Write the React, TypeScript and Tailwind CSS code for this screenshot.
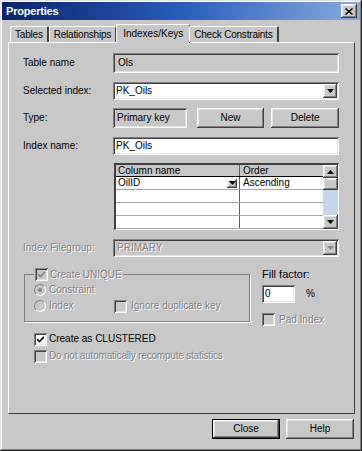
import React from 'react';

// classic win32 bevels
const raised =
  'shadow-[inset_-1px_-1px_#404040,inset_1px_1px_#ffffff,inset_-2px_-2px_#808080,inset_2px_2px_#e4e4e4]';
const sunken =
  'shadow-[inset_1px_1px_#808080,inset_-1px_-1px_#ffffff,inset_2px_2px_#404040,inset_-2px_-2px_#e4e4e4]';
const dim = "text-[#848484] [text-shadow:1px_1px_0_#ffffff]";

const Arrow: React.FC<{ up?: boolean; color?: string }> = ({ up, color = '#000' }) => (
  <svg width="7" height="4" viewBox="0 0 7 4">
    <path d={up ? 'M3.5 0 L7 4 L0 4 Z' : 'M0 0 L7 0 L3.5 4 Z'} fill={color} />
  </svg>
);

const DropBtn: React.FC<{ disabled?: boolean; className?: string }> = ({ disabled, className = '' }) => (
  <div className={`flex items-center justify-center bg-[#c8c8c8] ${raised} ${className}`}>
    <Arrow color={disabled ? '#8a8a8a' : '#000'} />
  </div>
);

const Check: React.FC<{ checked?: boolean; disabled?: boolean }> = ({ checked, disabled }) => (
  <div
    className={`w-[13px] h-[13px] shrink-0 flex items-center justify-center ${sunken} ${
      disabled ? 'bg-[#c8c8c8]' : 'bg-white'
    }`}
  >
    {checked && (
      <svg width="7" height="7" viewBox="0 0 7 7">
        <path d="M0 3 L2.5 5.5 L7 0.8" stroke={disabled ? '#808080' : '#000'} strokeWidth="1.6" fill="none" />
      </svg>
    )}
  </div>
);

const Radio: React.FC<{ on?: boolean }> = ({ on }) => (
  <div className="w-[12px] h-[12px] shrink-0 rounded-full border border-t-[#808080] border-l-[#808080] border-r-white border-b-white bg-[#c8c8c8] flex items-center justify-center">
    {on && <div className="w-[4px] h-[4px] rounded-full bg-[#808080]" />}
  </div>
);

const Label: React.FC<{ children: React.ReactNode; disabled?: boolean }> = ({ children, disabled }) => (
  <div className={`w-[90px] shrink-0 ${disabled ? dim : 'text-black'}`}>{children}</div>
);

const tabs = ['Tables', 'Relationships', 'Indexes/Keys', 'Check Constraints'];

const App: React.FC = () => {
  return (
    <div className="w-[362px] h-[451px] bg-[#c8c8c8] flex flex-col font-['Liberation_Sans',Arial,sans-serif] text-[10px] leading-none text-black shadow-[inset_-1px_-1px_#202020,inset_1px_1px_#e4e4e4,inset_-2px_-2px_#808080,inset_2px_2px_#ffffff] overflow-hidden">
      {/* title bar */}
      <div className="mx-[2px] mt-[2px] h-[18px] flex items-center justify-between pl-[4px] pr-[3px] bg-gradient-to-r from-[#0a246a] via-[#2a5cbc] to-[#86acdc]">
        <span className="text-white font-bold text-[11px] tracking-[-0.2px]">Properties</span>
        <div className={`w-[16px] h-[14px] bg-[#c8c8c8] flex items-center justify-center ${raised}`}>
          <svg width="8" height="7" viewBox="0 0 8 7">
            <path d="M0.5 0.5 L7.5 6.5 M7.5 0.5 L0.5 6.5" stroke="#000" strokeWidth="1.5" />
          </svg>
        </div>
      </div>

      {/* tabs */}
      <div className="flex items-end ml-[10px] mt-[4px] h-[18px] relative z-10">
        {tabs.map((t, i) =>
          i === 2 ? (
            <div
              key={t}
              className="h-[19px] -mx-[1px] px-[6px] pt-[4px] bg-[#c8c8c8] border-t border-l border-white border-r border-r-[#404040] rounded-t-[2px] -mb-[1px]"
            >
              {t}
            </div>
          ) : (
            <div
              key={t}
              className="h-[16px] px-[4px] pt-[3px] border-t border-l border-white border-r-2 border-r-[#404040] rounded-t-[2px] tracking-[-0.2px]"
            >
              {t}
            </div>
          )
        )}
      </div>

      {/* panel */}
      <div className="ml-[8px] w-[347px] h-[372px] border-l border-t border-white border-r border-b border-r-[#404040] border-b-[#404040] pl-[14px] pr-[15px] pt-[10px] flex flex-col">
        <div className="flex items-center h-[20px]">
          <Label>Table name</Label>
          <div className={`flex-1 h-[20px] px-[5px] flex items-center bg-[#c8c8c8] ${sunken}`}>Ols</div>
        </div>

        <div className="flex items-center h-[18px] mt-[9px]">
          <Label>Selected index:</Label>
          <div className={`flex-1 h-[18px] pl-[3px] pr-[2px] flex items-center justify-between bg-white ${sunken}`}>
            <span>PK_Oils</span>
            <DropBtn className="w-[14px] h-[14px]" />
          </div>
        </div>

        <div className="flex items-center h-[20px] mt-[8px]">
          <Label>Type:</Label>
          <div className={`w-[74px] h-[20px] px-[4px] flex items-center bg-[#c8c8c8] ${sunken}`}>Primary key</div>
          <div className={`ml-[10px] w-[68px] h-[20px] flex items-center justify-center ${raised}`}>New</div>
          <div className={`ml-[7px] w-[68px] h-[20px] flex items-center justify-center ${raised}`}>Delete</div>
        </div>

        <div className="flex items-center h-[18px] mt-[9px]">
          <Label>Index name:</Label>
          <div className={`flex-1 h-[18px] px-[3px] flex items-center bg-white ${sunken}`}>PK_Oils</div>
        </div>

        {/* columns grid */}
        <div className="flex mt-[8px]">
          <div className="w-[91px] shrink-0" />
          <div className="w-[225px] h-[67px] border-l-2 border-t-2 border-l-[#404040] border-t-[#404040] border-r border-b border-r-white border-b-white bg-white flex">
            <div className="flex-1 flex flex-col">
              <div className="flex h-[12px] bg-[#c8c8c8] border-b border-black">
                <div className="w-[124px] px-[2px] border-r border-[#606060] flex items-center">Column name</div>
                <div className="flex-1 px-[3px] flex items-center">Order</div>
              </div>
              {[0, 1, 2, 3].map((r) => (
                <div key={r} className="flex h-[13px] border-b border-[#a8a8a8]">
                  <div className="w-[124px] pl-[2px] pr-[2px] border-r border-[#606060] flex items-center justify-between">
                    {r === 0 && (
                      <>
                        <span>OilID</span>
                        <DropBtn className="w-[10px] h-[9px]" />
                      </>
                    )}
                  </div>
                  <div className="flex-1 px-[3px] flex items-center">{r === 0 ? 'Ascending' : ''}</div>
                </div>
              ))}
            </div>
            <div className="w-[15px] flex flex-col">
              <div className={`h-[13px] flex items-center justify-center bg-[#c8c8c8] ${raised}`}>
                <Arrow up />
              </div>
              <div className={`h-[12px] bg-[#c8c8c8] ${raised}`} />
              <div className="flex-1 bg-[#c6d6ea]" />
              <div className={`h-[14px] flex items-center justify-center bg-[#c8c8c8] ${raised}`}>
                <Arrow />
              </div>
            </div>
          </div>
        </div>

        <div className="flex items-center h-[18px] mt-[9px]">
          <Label disabled>Index Filegroup:</Label>
          <div className={`flex-1 h-[18px] pl-[4px] pr-[2px] flex items-center justify-between bg-[#c8c8c8] ${sunken}`}>
            <span className={dim}>PRIMARY</span>
            <DropBtn disabled className="w-[14px] h-[14px]" />
          </div>
        </div>

        {/* unique / fill factor */}
        <div className="flex mt-[11px]">
          <fieldset className="ml-[1px] w-[226px] h-[54px] border border-[#808080] shadow-[1px_1px_0_#ffffff] pl-[9px] pr-[4px]">
            <legend className="px-[1px] flex items-center gap-[2px]">
              <Check checked disabled />
              <span className={dim}>Create UNIQUE</span>
            </legend>
            <div className="flex items-center gap-[3px] h-[16px] mt-[1px]">
              <Radio on />
              <span className={dim}>Constraint</span>
            </div>
            <div className="flex items-center h-[16px]">
              <div className="w-[80px] flex items-center gap-[3px]">
                <Radio />
                <span className={dim}>Index</span>
              </div>
              <div className="flex items-center gap-[4px]">
                <Check disabled />
                <span className={dim}>Ignore duplicate key</span>
              </div>
            </div>
          </fieldset>

          <div className="ml-[12px] flex flex-col">
            <div className="h-[13px] flex items-center text-[11px]">Fill factor:</div>
            <div className="flex items-center mt-[4px]">
              <div className={`w-[33px] h-[18px] px-[3px] flex items-center bg-white ${sunken}`}>0</div>
              <span className="ml-[11px]">%</span>
            </div>
            <div className="flex items-center gap-[4px] mt-[10px]">
              <Check disabled />
              <span className={dim}>Pad Index</span>
            </div>
          </div>
        </div>

        <div className="flex items-center gap-[2px] ml-[11px] mt-[6px] h-[14px]">
          <Check checked />
          <span>Create as CLUSTERED</span>
        </div>
        <div className="flex items-center gap-[2px] ml-[11px] mt-[3px] h-[14px]">
          <Check disabled />
          <span className={`${dim} tracking-[-0.2px]`}>Do not automatically recompute statistics</span>
        </div>
      </div>

      {/* bottom buttons */}
      <div className="flex justify-end gap-[6px] pr-[8px] mt-[5px]">
        <div className={`w-[68px] h-[20px] border border-black flex items-center justify-center ${raised}`}>Close</div>
        <div className={`w-[68px] h-[20px] flex items-center justify-center ${raised}`}>Help</div>
      </div>
    </div>
  );
};

export default App;
